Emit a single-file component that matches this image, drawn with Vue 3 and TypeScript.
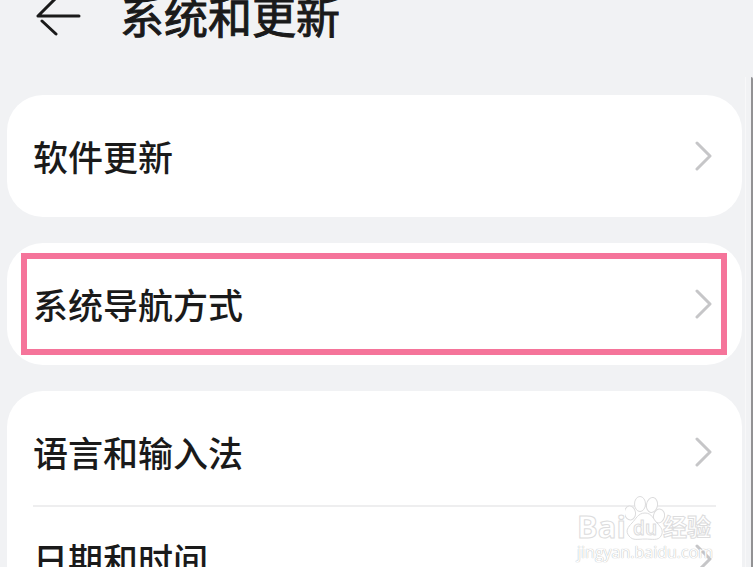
<script setup lang="ts">
interface SettingItem {
  label: string
  highlighted?: boolean
}

const groups: SettingItem[][] = [
  [{ label: '软件更新' }],
  [{ label: '系统导航方式', highlighted: true }],
  [{ label: '语言和输入法' }, { label: '日期和时间' }],
]
</script>

<template>
  <div class="screen">
    <main class="page">
      <header class="title-bar">
        <button class="back" type="button" aria-label="返回">
          <svg width="46" height="40" viewBox="0 0 46 40" aria-hidden="true">
            <path d="M44 20H3M21 2L3 20M7 25l14 13" />
          </svg>
        </button>
        <h1>系统和更新</h1>
      </header>

      <section
        v-for="(group, index) in groups"
        :key="index"
        class="card"
        :class="{ marked: group[0].highlighted }"
      >
        <button v-for="item in group" :key="item.label" class="row" type="button">
          <span>{{ item.label }}</span>
          <svg class="chevron" width="18" height="30" viewBox="0 0 18 30" aria-hidden="true">
            <path d="M3 2l13 13L3 28" />
          </svg>
        </button>
      </section>
    </main>

    <div class="edge"></div>

    <div class="watermark">
      <div class="brand">
        <span class="latin">Bai</span>
        <span class="paw">
          <svg width="40" height="46" viewBox="0 0 40 46" aria-hidden="true">
            <ellipse cx="5" cy="17" rx="5.5" ry="7" transform="rotate(-8 5 17)" />
            <ellipse cx="15" cy="8" rx="5.5" ry="7.5" />
            <ellipse cx="27" cy="9" rx="5.5" ry="7.5" transform="rotate(10 27 9)" />
            <ellipse cx="34" cy="20" rx="5.5" ry="7" transform="rotate(12 34 20)" />
            <path d="M20 17c7 0 8 6 12 10s7 8 4 13c-3 5-9 3-16 3s-12 2-16-3c-4-5-1-9 3-13s6-10 13-10z" />
          </svg>
          <span class="du">du</span>
        </span>
        <span class="han">经验</span>
      </div>
      <div class="site">jingyan.baidu.com</div>
    </div>
  </div>
</template>

<style>
body {
  background: #fff;
}
</style>

<style scoped>
.screen {
  position: relative;
  display: flex;
  height: calc(100vh - 10px);
  overflow: hidden;
  background: #f1f2f4;
  font-family: "Noto Sans CJK SC", sans-serif;
  color: #1a1a1a;
}

.page {
  flex: 1;
  min-width: 0;
  padding: 0 3px 0 7px;
}

.title-bar {
  display: flex;
  align-items: center;
  gap: 39px;
  height: 64px;
  margin-top: -16px;
  margin-bottom: 47px;
  padding-left: 28px;
}

.back {
  display: flex;
  padding: 0;
  border: 0;
  background: none;
}

.back path {
  fill: none;
  stroke: #1a1a1a;
  stroke-width: 3;
  stroke-linecap: round;
  stroke-linejoin: round;
}

h1 {
  margin: 0;
  padding-bottom: 2px;
  font-size: 44px;
  line-height: 64px;
  font-weight: 400;
  -webkit-text-stroke: 1px currentColor;
}

.card {
  position: relative;
  margin-bottom: 26px;
  padding: 8px 26px;
  border-radius: 36px;
  background: #fff;
}

.marked::after {
  content: "";
  position: absolute;
  inset: 10px 15px 10px 14px;
  border: 6px solid #f5749a;
  pointer-events: none;
}

.row {
  display: flex;
  align-items: center;
  justify-content: space-between;
  box-sizing: border-box;
  width: 100%;
  height: 106px;
  padding: 0 4px 0 0;
  border: 0;
  background: none;
  color: inherit;
  font: inherit;
  font-size: 35px;
  font-weight: 500;
  line-height: 52px;
  text-align: left;
}

.row + .row {
  border-top: 2px solid #eeeeef;
}

.chevron path {
  fill: none;
  stroke: #c6c6c8;
  stroke-width: 3;
  stroke-linecap: round;
  stroke-linejoin: round;
}

.edge {
  width: 8px;
  box-sizing: border-box;
  margin-top: 77px;
  border-right: 2px solid #929294;
  border-left: 1px solid #f8f8f9;
  border-top-right-radius: 2px;
}

.watermark {
  position: absolute;
  right: 41px;
  bottom: 5px;
  width: 135px;
  color: #fff;
  pointer-events: none;
}

.brand {
  display: flex;
  align-items: flex-end;
  height: 46px;
  line-height: 32px;
  white-space: nowrap;
  -webkit-text-stroke: 1px #dcdcdd;
}

.latin {
  width: 48px;
  font-family: "Open Sans", sans-serif;
  font-size: 31px;
  font-weight: 700;
}

.paw {
  display: grid;
  place-items: end center;
  width: 38px;
  height: 46px;
}

.paw svg,
.du {
  grid-area: 1 / 1;
}

.paw svg {
  fill: #fff;
  stroke: #dcdcdd;
}

.du {
  z-index: 1;
  font-family: "Open Sans", sans-serif;
  font-size: 19px;
  font-weight: 600;
  line-height: 28px;
}

.han {
  font-size: 24px;
  font-weight: 700;
}

.site {
  font-family: "Open Sans", sans-serif;
  font-size: 16px;
  line-height: 20px;
  text-shadow: 0 0 1px #b8b8ba, 0 0 1px #c8c8ca;
}
</style>
